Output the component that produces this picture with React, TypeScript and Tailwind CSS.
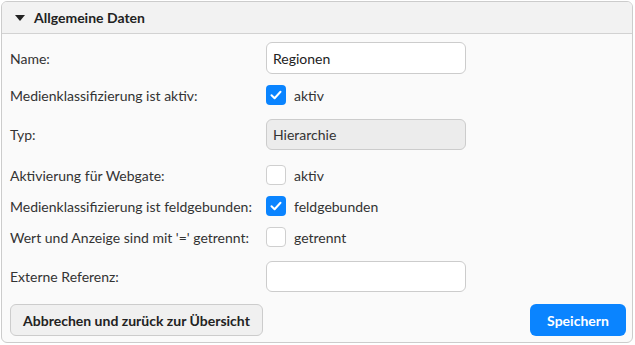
import React from "react";

const Check = ({ checked }: { checked: boolean }) =>
  checked ? (
    <span className="w-5 h-5 rounded-[4px] bg-[#0a84ff] flex items-center justify-center">
      <svg width="12" height="10" viewBox="0 0 12 10" fill="none">
        <path d="M1.5 5.2 L4.6 8.2 L10.5 1.8" stroke="white" strokeWidth="2" strokeLinecap="round" strokeLinejoin="round" />
      </svg>
    </span>
  ) : (
    <span className="w-5 h-5 rounded-[4px] bg-white border border-[#cfcfcf] box-border" />
  );

const Label = ({ children }: { children: React.ReactNode }) => (
  <div className="w-[256px] shrink-0 text-[14px] text-[#333]">{children}</div>
);

export default function App() {
  return (
    <div className="w-[635px] h-[345px] bg-white pt-px pl-px" style={{ fontFamily: "Lato, 'Noto Sans', sans-serif" }}>
      <div className="w-[632px] h-[342px] border border-[#cccccc] rounded-[6px] bg-[#fafafa] overflow-hidden flex flex-col">
        <div className="h-[32px] bg-[#f2f2f2] border-b border-[#d2d2d2] flex items-center pl-[13px] shrink-0">
          <svg width="10" height="6" viewBox="0 0 10 6" className="mr-[9px]">
            <path d="M0 0 L10 0 L5 6 Z" fill="#222" />
          </svg>
          <span className="text-[14px] font-bold text-[#222]">Allgemeine Daten</span>
        </div>
        <div className="flex flex-col pl-[8px] pr-[6px]">
          <div className="mt-[8px] h-[32px] flex items-center">
            <Label>Name:</Label>
            <div className="w-[200px] h-[32px] border border-[#cccccc] rounded-[6px] bg-white flex items-center px-[6px] text-[14px] text-[#222]">Regionen</div>
          </div>
          <div className="mt-[11px] h-[20px] flex items-center">
            <Label>Medienklassifizierung ist aktiv:</Label>
            <Check checked />
            <span className="ml-[8px] text-[14px] text-[#333]">aktiv</span>
          </div>
          <div className="mt-[14px] h-[31px] flex items-center">
            <Label>Typ:</Label>
            <div className="w-[200px] h-[31px] border border-[#cccccc] rounded-[6px] bg-[#ececec] flex items-center px-[6px] text-[14px] text-[#333]">Hierarchie</div>
          </div>
          <div className="mt-[15px] h-[20px] flex items-center">
            <Label>Aktivierung für Webgate:</Label>
            <Check checked={false} />
            <span className="ml-[8px] text-[14px] text-[#333]">aktiv</span>
          </div>
          <div className="mt-[11px] h-[20px] flex items-center">
            <Label>Medienklassifizierung ist feldgebunden:</Label>
            <Check checked />
            <span className="ml-[8px] text-[14px] text-[#333]">feldgebunden</span>
          </div>
          <div className="mt-[11px] h-[20px] flex items-center">
            <Label>Wert und Anzeige sind mit '=' getrennt:</Label>
            <Check checked={false} />
            <span className="ml-[8px] text-[14px] text-[#333]">getrennt</span>
          </div>
          <div className="mt-[14px] h-[31px] flex items-center">
            <Label>Externe Referenz:</Label>
            <div className="w-[200px] h-[31px] border border-[#cccccc] rounded-[6px] bg-white" />
          </div>
          <div className="mt-[12px] h-[32px] flex items-center justify-between">
            <button className="h-[32px] w-[253px] border border-[#cccccc] rounded-[6px] bg-[#f0f0f0] text-[14px] font-bold text-[#222]">Abbrechen und zurück zur Übersicht</button>
            <button className="h-[32px] w-[96px] rounded-[6px] bg-[#0a84ff] text-[14px] font-bold text-white">Speichern</button>
          </div>
        </div>
      </div>
    </div>
  );
}
